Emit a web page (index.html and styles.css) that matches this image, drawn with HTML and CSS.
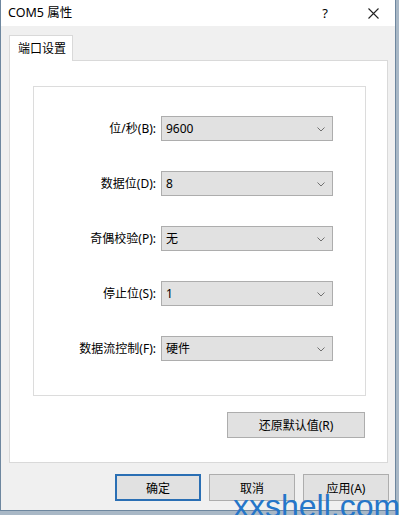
FILE: index.html
```html
<!DOCTYPE html>
<html>
    <head>
        <meta charset="utf-8" />
        <title>COM5 属性</title>
        <link rel="stylesheet" href="styles.css">
    </head>
    <body>
        <div class="window">
            <div class="titlebar">
                <span class="title">COM5 属性</span>
                <span class="help">?</span>
                <svg class="close" width="11" height="11" viewBox="0 0 11 11">
                    <path d="M0.5 0.5 L10.5 10.5 M10.5 0.5 L0.5 10.5" stroke="#222" stroke-width="1.1" fill="none" />
                </svg>
            </div>
            <div class="content">
                <div class="tabs">
                    <div class="tab">端口设置</div>
                </div>
                <div class="panel">
                    <div class="group">
                        <label>位/秒(B):</label>
                        <div class="combo">9600<svg class="chev" width="8" height="5" viewBox="0 0 8 5"><path d="M0.5 0.5 L4 4 L7.5 0.5" stroke="#707070" fill="none" /></svg></div>
                        <label>数据位(D):</label>
                        <div class="combo">8<svg class="chev" width="8" height="5" viewBox="0 0 8 5"><path d="M0.5 0.5 L4 4 L7.5 0.5" stroke="#707070" fill="none" /></svg></div>
                        <label>奇偶校验(P):</label>
                        <div class="combo">无<svg class="chev" width="8" height="5" viewBox="0 0 8 5"><path d="M0.5 0.5 L4 4 L7.5 0.5" stroke="#707070" fill="none" /></svg></div>
                        <label>停止位(S):</label>
                        <div class="combo">1<svg class="chev" width="8" height="5" viewBox="0 0 8 5"><path d="M0.5 0.5 L4 4 L7.5 0.5" stroke="#707070" fill="none" /></svg></div>
                        <label>数据流控制(F):</label>
                        <div class="combo">硬件<svg class="chev" width="8" height="5" viewBox="0 0 8 5"><path d="M0.5 0.5 L4 4 L7.5 0.5" stroke="#707070" fill="none" /></svg></div>
                    </div>
                    <div class="restore-row">
                        <button class="btn restore">还原默认值(R)</button>
                    </div>
                </div>
                <div class="footer">
                    <button class="btn default">确定</button>
                    <button class="btn">取消</button>
                    <button class="btn">应用(A)</button>
                </div>
            </div>
        </div>
        <div class="watermark">xxshell.com</div>
    </body>
</html>
```

FILE: styles.css
```css
html, body {
    margin: 0;
    padding: 0;
}
body {
    width: 399px;
    height: 515px;
    overflow: hidden;
    background: #a9b8c6;
    font-family: "Noto Sans", "Noto Sans CJK SC", sans-serif;
    font-size: 12px;
    color: #000;
    position: relative;
}
.window {
    width: 394px;
    height: 510px;
    border: 1px solid #6e879f;
    border-top: none;
    background: #f0f0f0;
    display: flex;
    flex-direction: column;
}
.titlebar {
    height: 26px;
    background: #fff;
    display: flex;
    align-items: center;
    padding-left: 7px;
}
.title {
    flex: 1;
    font-size: 12.5px;
    line-height: 16px;
}
.help {
    font-size: 13px;
    line-height: 16px;
    margin-right: 40px;
}
.close {
    margin-right: 16px;
}
.content {
    padding: 8px 0 0 8px;
    display: flex;
    flex-direction: column;
}
.tabs {
    display: flex;
    height: 26px;
}
.tab {
    width: 62px;
    background: #fff;
    border: 1px solid #d9d9d9;
    border-bottom: none;
    line-height: 25px;
    padding-left: 8px;
    box-sizing: border-box;
    width: 64px;
    position: relative;
    top: 1px;
}
.panel {
    width: 379px;
    height: 403px;
    box-sizing: border-box;
    background: #fff;
    border: 1px solid #d9d9d9;
    padding: 25px 21px 0 23px;
}
.group {
    width: 333px;
    height: 310px;
    box-sizing: border-box;
    border: 1px solid #dcdcdc;
    padding-top: 29px;
    display: grid;
    grid-template-columns: 122px 172px;
    grid-auto-rows: 25px;
    column-gap: 5px;
    row-gap: 30px;
    align-content: start;
}
.group label {
    text-align: right;
    align-self: center;
    line-height: 16px;
}
.combo {
    background: #e1e1e1;
    border: 1px solid #adadad;
    display: flex;
    align-items: center;
    padding-left: 4px;
    line-height: 16px;
    position: relative;
}
.chev {
    position: absolute;
    right: 7px;
    top: 10px;
}
.restore-row {
    display: flex;
    justify-content: flex-end;
    margin-top: 16px;
    padding-right: 1px;
}
.btn {
    font-family: "Noto Sans", "Noto Sans CJK SC", sans-serif;
    font-size: 12px;
    color: #000;
    background: #e1e1e1;
    border: 1px solid #adadad;
    padding: 0;
    margin: 0;
    height: 27px;
    width: 86px;
}
.restore {
    width: 138px;
    height: 26px;
}
.footer {
    display: flex;
    justify-content: flex-end;
    gap: 8px;
    margin-top: 11px;
    padding-right: 6px;
}
.btn.default {
    border: 2px solid #2a6fb4;
}
.watermark {
    position: absolute;
    left: 233px;
    top: 490px;
    font-family: "Liberation Sans", sans-serif;
    font-size: 32px;
    line-height: 32px;
    color: #2576c9;
    white-space: nowrap;
}
```
